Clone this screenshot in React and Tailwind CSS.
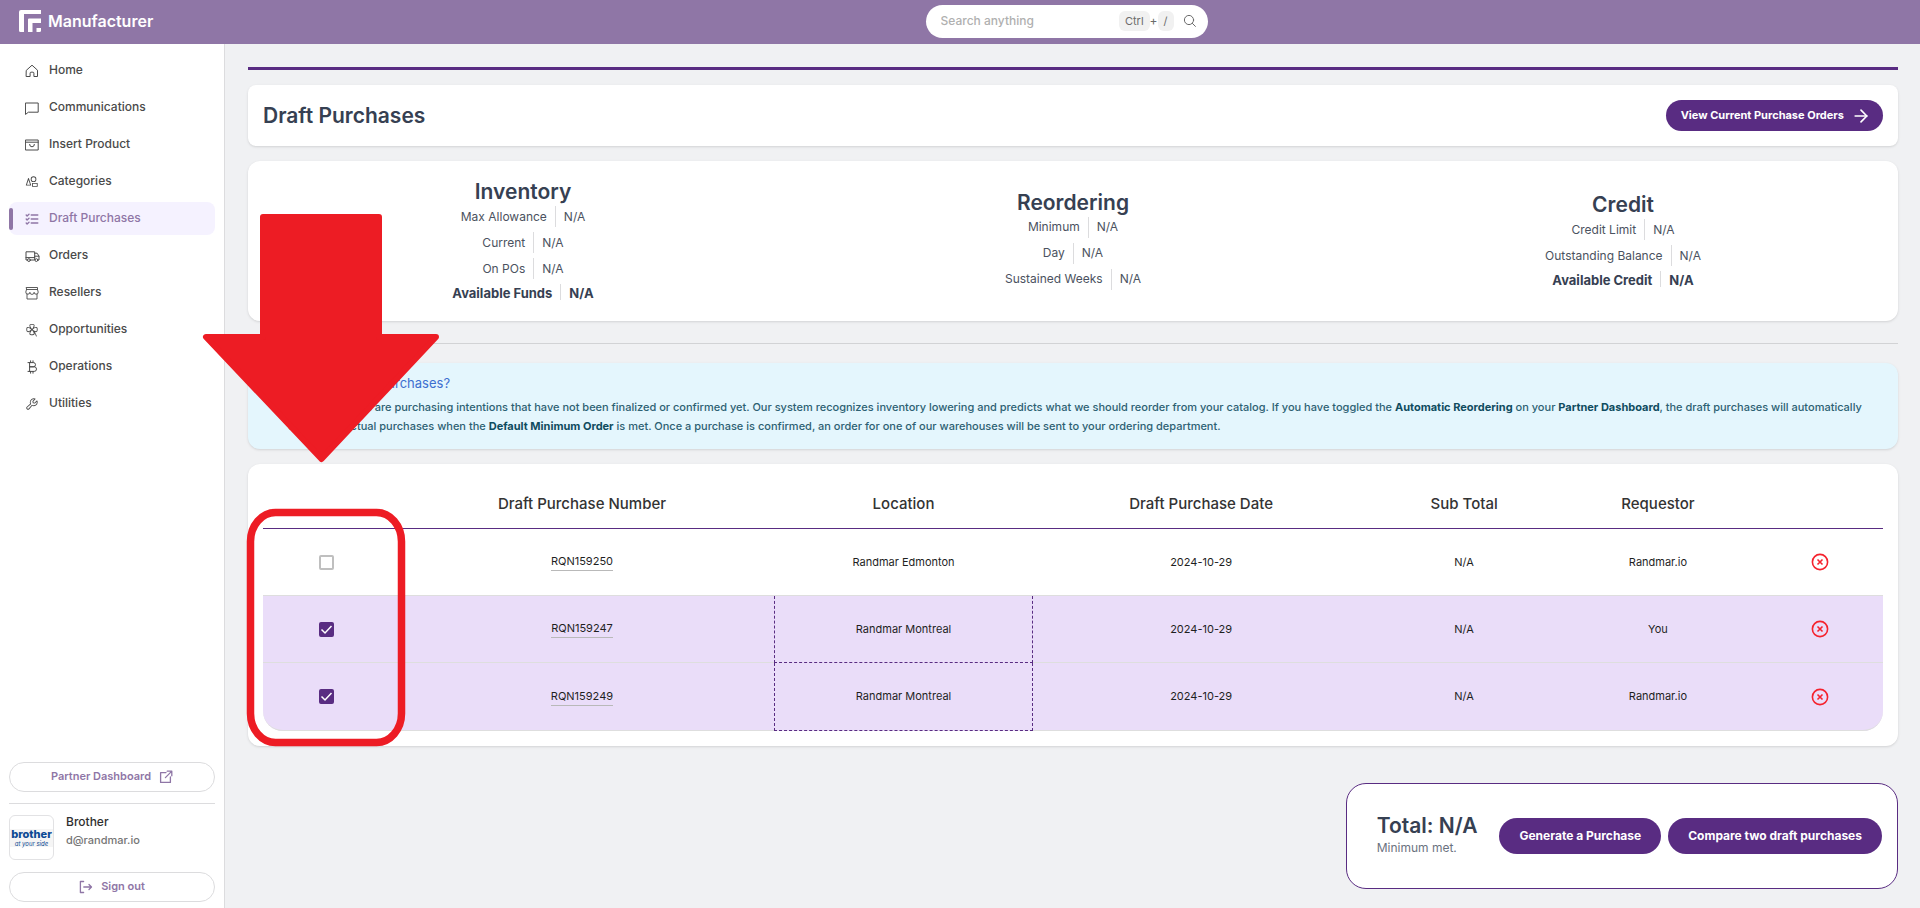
import { PiClover, PiShapes, PiWrench } from "react-icons/pi";
import { ArrowRight } from "lucide-react";

const Svg = ({ className = "size-[14px]", width = 1, children }) => (
  <svg
    viewBox="0 0 14 14"
    fill="none"
    stroke="currentColor"
    strokeWidth={width}
    strokeLinecap="round"
    strokeLinejoin="round"
    className={className}
    aria-hidden="true"
  >
    {children}
  </svg>
);

const HomeIcon = () => (
  <Svg>
    <path d="M1.5 6.2 7 1.2l5.5 5v6.3H8.9V9.2a1 1 0 0 0-1-1H6.1a1 1 0 0 0-1 1v3.3H1.5z" />
  </Svg>
);

const ChatIcon = () => (
  <Svg>
    <path d="M.8 2h12.4v9.2H3.4L.8 13.2z" />
  </Svg>
);

const BoxIcon = () => (
  <Svg>
    <path d="M.8 2h12.4v10H.8zM.8 4.2h12.4M4.6 6.4a2.4 2.4 0 0 0 4.8 0" />
  </Svg>
);

const ChecklistIcon = () => (
  <Svg width={1.4}>
    <path d="M6.2 3h6.6M6.2 7h6.6M6.2 11h6.6M1.2 3l.9.9L4 2.2M1.2 7l.9.9L4 6.2M1.2 11l.9.9L4 10.2" />
  </Svg>
);

const TruckIcon = () => (
  <Svg className="h-[14px] w-[15px]">
    <path d="M1.8 11H.5V2.8h8.7V11H5M.5 8.6h8.7M9.2 4.2h2.4l1.9 2.9V11h-1M9.2 7.2h4.2" />
    <circle cx="3.4" cy="11.1" r="1.4" />
    <circle cx="10.9" cy="11.1" r="1.4" />
  </Svg>
);

const StoreIcon = () => (
  <Svg width={0.9}>
    <path d="M1.500 1.500h11v2l.700 2.500a2 2 0 0 1-4.100.300 2.100 2.100 0 0 1-4.200 0A2 2 0 0 1 .800 6l.700-2.500zM1.500 3.500h11M2 8v5h10V8" />
  </Svg>
);

const BitcoinIcon = () => (
  <Svg>
    <path d="M3 2.6h5.4a2.1 2.1 0 0 1 0 4.2H4.6M4.6 6.8h4.6a2.3 2.3 0 0 1 0 4.6H3M4.6 2.6v8.8M5.6.8v1.8M8 .8v1.8M5.6 11.4v1.8M8 11.4v1.8" />
  </Svg>
);

const navItems = [
  { label: "Home", icon: HomeIcon },
  { label: "Communications", icon: ChatIcon },
  { label: "Insert Product", icon: BoxIcon },
  { label: "Categories", icon: PiShapes },
  { label: "Draft Purchases", icon: ChecklistIcon, active: true },
  { label: "Orders", icon: TruckIcon },
  { label: "Resellers", icon: StoreIcon },
  { label: "Opportunities", icon: PiClover },
  { label: "Operations", icon: BitcoinIcon },
  { label: "Utilities", icon: PiWrench },
];

const stats = [
  {
    title: "Inventory",
    rows: ["Max Allowance", "Current", "On POs"],
    total: "Available Funds",
  },
  { title: "Reordering", rows: ["Minimum", "Day", "Sustained Weeks"] },
  {
    title: "Credit",
    rows: ["Credit Limit", "Outstanding Balance"],
    total: "Available Credit",
  },
];

const drafts = [
  { id: "RQN159250", location: "Randmar Edmonton", requestor: "Randmar.io", selected: false },
  { id: "RQN159247", location: "Randmar Montreal", requestor: "You", selected: true },
  { id: "RQN159249", location: "Randmar Montreal", requestor: "Randmar.io", selected: true },
];

const Header = () => (
  <header className="flex h-11 shrink-0 items-center bg-[#8f76a6] pb-[2px]">
    <a href="#" className="flex w-[225px] items-center gap-[7px] pl-[19px] text-white">
      <svg viewBox="0 0 22 22" className="size-[22px]" fill="currentColor" aria-hidden="true">
        <path d="M2 0h20v4H5v18H1.500A1.500 1.500 0 0 1 0 20.500V2a2 2 0 0 1 2-2z" />
        <path d="M10 8.500h12V13h-8.500v9H9V9.500a1 1 0 0 1 1-1z" />
        <path d="M17.500 18H22v2.500a1.500 1.500 0 0 1-1.500 1.500h-3z" />
      </svg>
      <span className="text-base font-semibold">Manufacturer</span>
    </a>
    <div className="flex flex-1 justify-center pr-3">
      <div className="flex h-[33px] w-[282px] items-center rounded-full bg-white pl-[15px] pr-[11px] text-[#6b6b6b]">
        <input
          type="text"
          aria-label="Search anything"
          placeholder="Search anything"
          className="min-w-0 flex-1 text-xs font-medium placeholder:text-[#b0b0b0] outline-none"
        />
        <kbd className="rounded-md bg-[#f1f1f1] px-[6px] font-[Inter,sans-serif] text-[11px] leading-5">Ctrl</kbd>
        <span className="text-xs">+</span>
        <kbd className="rounded-md bg-[#f1f1f1] px-[6px] font-[Inter,sans-serif] text-[11px] leading-5">/</kbd>
        <button type="button" aria-label="Search" className="ml-[9px]">
          <Svg>
            <circle cx="6" cy="6" r="4.600" />
            <path d="m9.400 9.400 3 3" />
          </Svg>
        </button>
      </div>
    </div>
  </header>
);

const Sidebar = () => (
  <aside className="flex w-[225px] shrink-0 flex-col justify-between border-r border-[#dcdcde] bg-white px-[9px] pb-[6px] pt-[10px]">
    <nav className="flex flex-col gap-1">
      {navItems.map(({ label, icon: Icon, active }) => (
        <a
          key={label}
          href="#"
          className={
            active
              ? "flex h-[33px] items-center rounded-lg bg-[#f5f2ff] text-xs font-medium text-[#8f76a6]"
              : "flex h-[33px] items-center text-xs font-medium text-[#4a4a4a]"
          }
        >
          <span className={active ? "mr-3 h-[22px] w-1 rounded-xs bg-[#8f76a6]" : "mr-3 w-1"} />
          <span className="flex w-6 items-center">
            <Icon className="size-[14px]" />
          </span>
          <span className="pb-[2px]">{label}</span>
        </a>
      ))}
    </nav>
    <div>
      <a
        href="#"
        className="flex h-[30px] items-center justify-center gap-2 rounded-full border border-[#dcdcde] text-[11px] font-semibold text-[#8f76a6]"
      >
        <span className="pb-[2px]">Partner Dashboard</span>
        <Svg width={1.3}>
          <path d="M7 2.600H1.600v9.800h9.800V7M8.200 1.200h4.600v4.600M12.600 1.400 6.400 7.600" />
        </Svg>
      </a>
      <div className="mt-[11px] flex gap-3 border-t border-[#dcdcde] pt-[11px]">
        <div className="flex size-[45px] flex-col items-center justify-center rounded-md border border-[#e2e2e4] text-[#0d4a94]">
          <div className="flex w-[43px] flex-col items-center bg-[#f5f5f5] leading-none">
            <span className="text-[11px] font-extrabold leading-[11px]">brother</span>
            <span className="text-[6px] italic leading-[7px]">at your side</span>
          </div>
        </div>
        <div>
          <p className="text-xs font-medium leading-[14px] text-[#2f2f2f]">Brother</p>
          <p className="mt-1 text-[11px] font-medium leading-[14px] text-[#757575]">d@randmar.io</p>
        </div>
      </div>
      <button
        type="button"
        className="mt-3 flex h-[30px] w-full items-center justify-center gap-2 rounded-full border border-[#dcdcde] text-[11px] font-semibold text-[#8f76a6]"
      >
        <Svg width={1.3}>
          <path d="M4.600 1.500H1.400v11h3.200M4.800 7h7.600M10 4.500 12.500 7 10 9.500" />
        </Svg>
        <span className="pb-[2px]">Sign out</span>
      </button>
    </div>
  </aside>
);

const StatColumn = ({ title, rows, total }) => (
  <div className="flex flex-col items-center text-xs text-[#4b5260]">
    <h2 className="mb-1 text-[21px] font-semibold leading-5 text-[#364052]">{title}</h2>
    <div className="flex flex-col items-center gap-[5px]">
      {rows.map((row) => (
        <div key={row} className="flex h-[21px] items-center">
          <span>{row}</span>
          <span className="mx-2 w-px self-stretch bg-[#dcdcde]" />
          <span>N/A</span>
        </div>
      ))}
      {total && (
        <div className="flex h-4 items-center text-[13px] font-bold leading-4 text-[#364052]">
          <span className="pt-px">{total}</span>
          <span className="mx-2 w-px self-stretch bg-[#dcdcde]" />
          <span className="pt-px">N/A</span>
        </div>
      )}
    </div>
  </div>
);

const DraftRow = ({ draft }) => {
  const { id, location, requestor, selected } = draft;
  return (
    <tr
      className={
        selected
          ? "h-[67px] bg-[#eaddf9] last:h-[68px] *:border-b *:border-[#dedede] last:*:first:rounded-bl-[20px] last:*:last:rounded-br-[20px]"
          : "h-[67px] *:border-b *:border-[#dedede]"
      }
    >
      <td>
        <span className="grid place-items-center">
          <input
            type="checkbox"
            aria-label={`Select ${id}`}
            defaultChecked={selected}
            className="peer col-start-1 row-start-1 size-[15px] appearance-none rounded-xs border-2 border-[#bfbfbf] bg-white checked:border-[#592c82] checked:bg-[#592c82]"
          />
          <svg
            viewBox="0 0 15 15"
            className="pointer-events-none invisible col-start-1 row-start-1 size-[15px] peer-checked:visible"
            fill="none"
            stroke="#fff"
            strokeWidth="1.500"
            aria-hidden="true"
          >
            <path d="m2.500 7.500 3.500 3.500 6.500-7" />
          </svg>
        </span>
      </td>
      <td>
        <a href="#" className="inline-block border-b border-[#b9b9b9] leading-[17px]">
          {id}
        </a>
      </td>
      <td className={selected ? "border-x border-dashed !border-[#592c82]" : ""}>{location}</td>
      <td>2024-10-29</td>
      <td>N/A</td>
      <td>{requestor}</td>
      <td>
        <button type="button" aria-label={`Delete ${id}`} className="mx-auto block text-[#f5222d]">
          <svg viewBox="0 0 18 18" className="size-[18px]" fill="none" stroke="currentColor" strokeWidth="1.600" aria-hidden="true">
            <circle cx="9" cy="9" r="7.600" />
            <path d="m6.500 6.500 5 5M11.500 6.500l-5 5" />
          </svg>
        </button>
      </td>
    </tr>
  );
};

const DraftTable = () => (
  <section className="mt-[15px] rounded-xl bg-white p-[15px] shadow-sm">
    <table className="w-full table-fixed border-separate border-spacing-0 text-center text-[11px] text-[#1f1f1f]">
      <colgroup>
        <col className="w-[7.84%]" />
        <col className="w-[23.7%]" />
        <col className="w-[16%]" />
        <col className="w-[20.74%]" />
        <col className="w-[11.73%]" />
        <col className="w-[12.2%]" />
        <col />
      </colgroup>
      <thead>
        <tr className="h-[50px] text-[15px] text-[#333] *:border-b *:border-[#592c82] *:pt-[2px] *:font-medium">
          <th aria-label="Select" />
          <th>Draft Purchase Number</th>
          <th>Location</th>
          <th>Draft Purchase Date</th>
          <th>Sub Total</th>
          <th>Requestor</th>
          <th aria-label="Delete" />
        </tr>
      </thead>
      <tbody>
        {drafts.map((draft) => (
          <DraftRow key={draft.id} draft={draft} />
        ))}
      </tbody>
    </table>
  </section>
);

// Red marker pointing at the selection column
const Callout = () => (
  <svg
    viewBox="0 0 240 540"
    className="pointer-events-none absolute left-[202px] top-[212px] h-[540px] w-[240px]"
    aria-hidden="true"
  >
    <path
      d="M61 5h116v120h57L119.500 247 4 125h57z"
      fill="#ed1c24"
      stroke="#ed1c24"
      strokeWidth="6"
      strokeLinejoin="round"
    />
    <rect x="48.500" y="300.500" width="151" height="230" rx="25" ry="29" fill="none" stroke="#ed1c24" strokeWidth="7.500" />
  </svg>
);

export default function App() {
  return (
    <div className="relative flex min-h-screen flex-col font-[Inter,sans-serif]">
      <Header />
      <div className="flex flex-1">
        <Sidebar />
        <main className="min-w-0 flex-1 bg-[#f0f1f3] pb-[18px] pl-[23px] pr-[22px] pt-[23px]">
          <div className="h-[3px] bg-[#592c82]" />

          <section className="mt-[15px] flex h-[61px] items-center justify-between rounded-lg bg-white px-[15px] shadow-sm">
            <h1 className="text-[21px] font-semibold text-[#364052]">Draft Purchases</h1>
            <a
              href="#"
              className="flex h-[31px] items-center gap-[7px] rounded-full bg-[#592c82] pl-[15px] pr-3 text-[11px] font-bold text-white"
            >
              View Current Purchase Orders
              <ArrowRight size={20} />
            </a>
          </section>

          <section className="mt-[15px] grid h-[160px] grid-cols-3 items-center rounded-xl bg-white shadow-sm">
            {stats.map((stat) => (
              <StatColumn key={stat.title} {...stat} />
            ))}
          </section>

          <hr className="mt-[22px] border-[#d2d3d5]" />

          <section className="mt-[19px] h-[86px] rounded-xl bg-[#e4f6fd] pl-10 pr-[15px] pt-3 text-[11px] font-medium text-[#2d6173] shadow-sm">
            <h2 className="text-[13px] font-normal leading-[17px] text-[#3d6fd0]">What are draft purchases?</h2>
            <p className="mt-[6px] leading-[19px]">
              Draft purchases are purchasing intentions that have not been finalized or confirmed yet. Our system
              recognizes inventory lowering and predicts what we should reorder from your catalog. If you have toggled
              the <b className="text-[#0f4c5f]">Automatic Reordering</b> on your{" "}
              <b className="text-[#0f4c5f]">Partner Dashboard</b>, the draft purchases will automatically
              <br />
              convert to actual purchases when the <b className="text-[#0f4c5f]">Default Minimum Order</b> is met. Once a
              purchase is confirmed, an order for one of our warehouses will be sent to your ordering department.
            </p>
          </section>

          <DraftTable />

          <section className="ml-auto mt-[37px] flex h-[106px] w-fit items-center rounded-[20px] border border-[#592c82] bg-white pl-[30px] pr-[15px]">
            <div className="mr-[22px]">
              <p className="text-[21px] font-semibold leading-6 text-[#364052]">Total: N/A</p>
              <p className="text-xs leading-5 text-[#6b7280]">Minimum met.</p>
            </div>
            <div className="flex gap-[7px] text-xs font-bold text-white">
              <button type="button" className="h-9 rounded-full bg-[#592c82] px-5">
                Generate a Purchase
              </button>
              <button type="button" className="h-9 rounded-full bg-[#592c82] px-5">
                Compare two draft purchases
              </button>
            </div>
          </section>
        </main>
      </div>
      <Callout />
    </div>
  );
}
